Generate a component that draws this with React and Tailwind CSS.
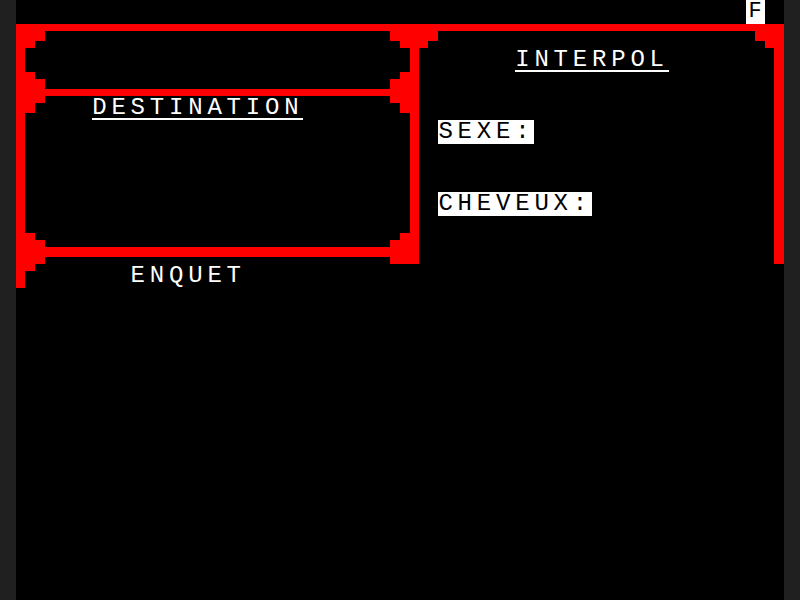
// Minitel-style screen: red mosaic frame, 40x25 character grid (19.2 x 24 px cells)

function Ornament({ className, w, h, rects }) {
  return (
    <svg
      className={`absolute pointer-events-none ${className}`}
      width={w}
      height={h}
      viewBox={`0 0 ${w} ${h}`}
      shapeRendering="crispEdges"
    >
      {rects.map(([x, y, rw, rh], i) => (
        <rect key={i} x={x} y={y} width={rw} height={rh} fill="#ff0000" />
      ))}
    </svg>
  );
}

function Title({ children }) {
  return <span className="border-b-2 border-white">{children}</span>;
}

function Field({ children }) {
  return <span className="bg-white text-black">{children}</span>;
}

export default function App() {
  return (
    <div className="flex h-[600px] w-[800px] justify-center bg-[#202020]">
      <div className="relative h-[600px] w-[768px] bg-black font-['Liberation_Mono',monospace] text-[24px] leading-6 tracking-[4.8px] text-white">
        {/* status row */}
        <div className="flex h-6 justify-end pr-[19.2px]">
          <span className="flex h-6 w-[19.2px] justify-center bg-white text-[22px] tracking-normal text-black">
            F
          </span>
        </div>

        {/* frame */}
        <div className="h-[7.2px] bg-[#ff0000]" />
        <div className="flex h-[256.8px] items-start">
          <div className="flex h-full w-[403.2px] flex-col border-l-[9.6px] border-[#ff0000]">
            <div className="h-[57.6px] border-r-[9.6px] border-[#ff0000]" />
            <div className="h-[7.2px] bg-[#ff0000]" />
            <div className="h-[151.2px] border-r-[9.6px] border-[#ff0000] pl-[67.2px]">
              <div className="flex h-6">
                <Title>DESTINATION</Title>
              </div>
            </div>
            <div className="h-[9.6px] bg-[#ff0000]" />
            <div className="h-[7.2px]" />
            <div className="flex h-6 pl-[105.6px]">ENQUET</div>
          </div>

          <div className="flex h-[232.8px] flex-1 flex-col pt-[16.8px]">
            <div className="flex h-6 pl-[96px]">
              <Title>INTERPOL</Title>
            </div>
            <div className="mt-12 flex h-6 pl-[19.2px]">
              <Field>SEXE:</Field>
            </div>
            <div className="mt-12 flex h-6 pl-[19.2px]">
              <Field>CHEVEUX:</Field>
            </div>
          </div>

          <div className="h-[232.8px] w-[9.6px] bg-[#ff0000]" />
        </div>

        {/* mosaic corner ornaments */}
        <Ornament
          className="left-0 top-[31.2px]"
          w={28.8}
          h={16.8}
          rects={[[0, 0, 28.8, 9.6], [0, 9.6, 19.2, 7.2]]}
        />
        <Ornament
          className="left-0 top-[72px]"
          w={28.8}
          h={40.8}
          rects={[[0, 0, 19.2, 7.2], [0, 7.2, 28.8, 24], [0, 31.2, 19.2, 9.6]]}
        />
        <Ornament
          className="left-0 top-[232.8px]"
          w={28.8}
          h={38.4}
          rects={[[0, 0, 19.2, 7.2], [0, 7.2, 28.8, 24], [0, 31.2, 19.2, 7.2]]}
        />
        <Ornament
          className="left-[374.4px] top-[31.2px]"
          w={48}
          h={16.8}
          rects={[[0, 0, 48, 9.6], [9.6, 9.6, 28.8, 7.2]]}
        />
        <Ornament
          className="left-[374.4px] top-[72px]"
          w={28.8}
          h={40.8}
          rects={[[9.6, 0, 19.2, 7.2], [0, 7.2, 28.8, 24], [9.6, 31.2, 19.2, 9.6]]}
        />
        <Ornament
          className="left-[374.4px] top-[232.8px]"
          w={28.8}
          h={31.2}
          rects={[[9.6, 0, 19.2, 7.2], [0, 7.2, 28.8, 24]]}
        />
        <Ornament
          className="left-[739.2px] top-[31.2px]"
          w={28.8}
          h={16.8}
          rects={[[0, 0, 28.8, 9.6], [9.6, 9.6, 19.2, 7.2]]}
        />
      </div>
    </div>
  );
}
